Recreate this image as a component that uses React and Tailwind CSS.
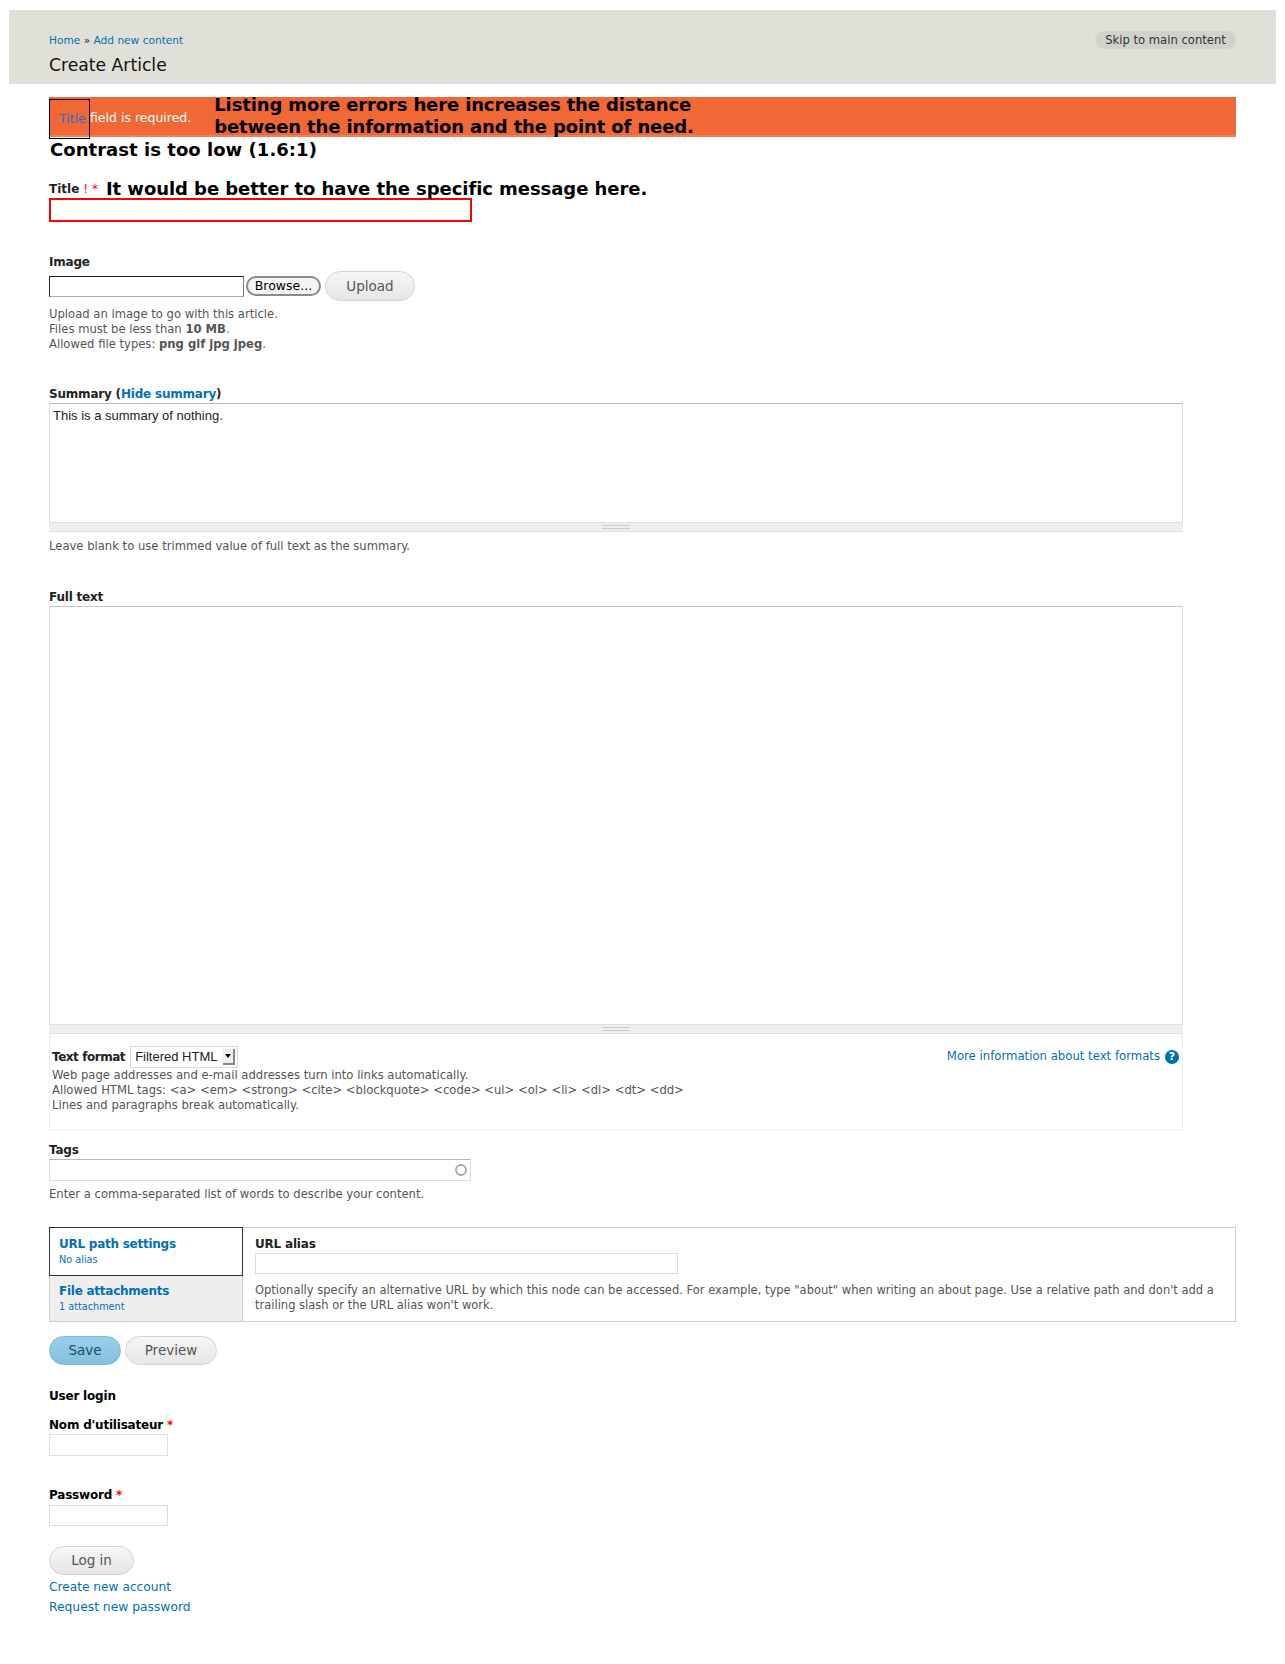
const linkCls = "text-[#0071b3]";
const labelCls = "block text-[12px] leading-[16px] font-bold tracking-[-0.2px] text-[#222]";
const helpCls = "text-[11.6px] leading-[15px] text-[#555]";
const btnCls = "rounded-[15px] border border-[#d4d4d4] bg-gradient-to-b from-[#f6f6f6] to-[#e6e6e6] text-[13.5px] text-[#555] text-center";

function Grip() {
  return (
    <div className="h-[10px] bg-[#eeeeee] border-y border-[#e0e0e0] flex items-center justify-center">
      <div className="w-[28px] h-[4px] border-y border-[#cccccc]" />
    </div>
  );
}

export default function App() {
  return (
    <div className="w-[1285px] h-[1664px] bg-white font-['DejaVu_Sans',sans-serif] text-[#333] pt-[10px] pl-[9px] pr-[9px]">
      <header className="h-[74px] bg-[#e0e0d8] pl-[40px] pr-[40px] flex justify-between">
        <div className="pt-[22px]">
          <div className="text-[10.6px] leading-[16px] text-[#222]">
            <a className={linkCls}>Home</a> » <a className={linkCls}>Add new content</a>
          </div>
          <h1 className="mt-[5px] text-[17.2px] leading-[24px] text-[#111]">Create Article</h1>
        </div>
        <div className="mt-[21px] h-[18px] w-[141px] rounded-[9px] bg-[#d2d2ca] text-[11.6px] leading-[18px] text-[#333] text-center">
          Skip to main content
        </div>
      </header>

      <main className="pl-[40px] pr-[40px]">
        <div className="mt-[13px] h-[40px] bg-[#f06835] border-b-2 border-[#f0805a] flex">
          <div className="mt-[2px] h-[40px] w-[41px] shrink-0 border border-black pl-[9px] text-[12.5px] leading-[38px] text-[#2a72c8]">
            Title
          </div>
          <span className="text-[12.5px] leading-[41px] text-white">field is required.</span>
          <div className="ml-[23px] -mt-[3px] text-[18px] leading-[21.5px] tracking-[-0.13px] font-bold text-black whitespace-nowrap">
            Listing more errors here increases the distance
            <br />
            between the information and the point of need.
          </div>
        </div>
        <div className="mt-[2px] pl-[1px] text-[18px] leading-[22px] tracking-[0.04px] font-bold text-black">Contrast is too low (1.6:1)</div>

        <div className="mt-[17px] flex items-center h-[20px] font-bold">
          <span className="mt-[2px] text-[12px] text-[#222]">Title</span>
          <span className="ml-[4px] mt-[2px] text-[#ff0000] font-normal text-[12px]">! *</span>
          <span className="ml-[8px] text-[18px] tracking-[-0.06px] text-black">It would be better to have the specific message here.</span>
        </div>
        <input className="block w-[423px] h-[24px] border-2 border-[#ff0000]" />

        <label className={`${labelCls} mt-[32px]`}>Image</label>
        <div className="mt-[1px] flex items-center h-[30px]">
          <input className="w-[195px] h-[21px] border border-[#777] border-t-[#222] border-l-[#222] border-b-[#aaa]" />
          <div className="ml-[2px] w-[75px] h-[20px] rounded-[10px] border-2 border-[#8a8a8a] bg-[#f4f4f4] text-[12.5px] leading-[16px] text-black text-center">
            Browse...
          </div>
          <div className={`${btnCls} ml-[4px] w-[90px] h-[30px] leading-[28px]`}>Upload</div>
        </div>
        <div className={`${helpCls} mt-[6px]`}>
          Upload an image to go with this article.
          <br />
          Files must be less than <strong>10 MB</strong>.
          <br />
          Allowed file types: <strong>png gif jpg jpeg</strong>.
        </div>

        <label className={`${labelCls} mt-[34px]`}>
          Summary (<a className={linkCls}>Hide summary</a>)
        </label>
        <div className="w-[1134px] mt-[1px]">
          <textarea
            defaultValue="This is a summary of nothing."
            className="block w-full h-[119px] border border-[#dddddd] border-b-0 border-t-[#b8b8b8] px-[3px] py-[4px] font-['Liberation_Sans',sans-serif] text-[13px] leading-[16px] text-[#222] resize-none"
          />
          <Grip />
        </div>
        <div className={`${helpCls} mt-[7px]`}>Leave blank to use trimmed value of full text as the summary.</div>

        <label className={`${labelCls} mt-[35px]`}>Full text</label>
        <div className="w-[1134px] mt-[1px]">
          <textarea className="block w-full h-[418px] border border-[#dddddd] border-t-[#c8c8c8] border-b-0 resize-none" />
          <Grip />
          <div className="h-[96px] border border-t-0 border-[#eeeeee] pl-[2px] pr-[3px] pt-[12px]">
            <div className="flex items-center justify-between h-[22px]">
              <div className="flex items-center">
                <span className="text-[12px] font-bold tracking-[-0.45px] text-[#222]">Text format</span>
                <div className="ml-[5px] w-[108px] h-[22px] border border-[#dddddd] flex items-center justify-between pl-[4px] pr-[2px] font-['Liberation_Sans',sans-serif] text-[13px] text-[#222]">
                  Filtered HTML
                  <span className="w-[12px] h-[16px] bg-[#eeeeee] border-r-2 border-b-2 border-[#888] flex items-center justify-center">
                    <span className="border-x-[3px] border-x-transparent border-t-[4px] border-t-black" />
                  </span>
                </div>
              </div>
              <div className="flex items-center">
                <a className={`${linkCls} text-[11.7px]`}>More information about text formats</a>
                <span className="ml-[5px] w-[14px] h-[14px] rounded-full bg-[#0071b3] text-white text-[11px] leading-[14px] font-bold text-center">?</span>
              </div>
            </div>
            <div className={helpCls}>
              Web page addresses and e-mail addresses turn into links automatically.
              <br />
              Allowed HTML tags: &lt;a&gt; &lt;em&gt; &lt;strong&gt; &lt;cite&gt; &lt;blockquote&gt; &lt;code&gt; &lt;ul&gt; &lt;ol&gt; &lt;li&gt; &lt;dl&gt; &lt;dt&gt; &lt;dd&gt;
              <br />
              Lines and paragraphs break automatically.
            </div>
          </div>
        </div>

        <label className={`${labelCls} mt-[12px]`}>Tags</label>
        <div className="mt-[1px] w-[422px] h-[22px] border border-[#dddddd] border-t-[#b8b8b8] flex items-center justify-end pr-[3px]">
          <span className="w-[12px] h-[12px] rounded-full border-2 border-[#aaa]" />
        </div>
        <div className={`${helpCls} mt-[6px]`}>Enter a comma-separated list of words to describe your content.</div>

        <div className="mt-[25px] h-[95px] border border-[#cccccc] flex">
          <div className="w-[193px] shrink-0 bg-[#eeeeee] border-r border-[#cccccc]">
            <div className="h-[49px] -ml-[1px] -mt-[1px] w-[194px] bg-white border border-[#333] pl-[9px] pt-[8px]">
              <div className={`${linkCls} text-[12px] leading-[16px] font-bold tracking-[-0.25px]`}>URL path settings</div>
              <div className={`${linkCls} text-[9.7px] leading-[16px]`}>No alias</div>
            </div>
            <div className="pl-[9px] pt-[7px]">
              <div className={`${linkCls} text-[12px] leading-[16px] font-bold tracking-[-0.25px]`}>File attachments</div>
              <div className={`${linkCls} text-[9.7px] leading-[16px]`}>1 attachment</div>
            </div>
          </div>
          <div className="pl-[12px] pr-[12px] pt-[8px] grow">
            <label className={labelCls}>URL alias</label>
            <input className="block mt-[1px] w-[423px] h-[21px] border border-[#dddddd]" />
            <div className="mt-[9px] text-[11.5px] leading-[15px] text-[#555]">
              Optionally specify an alternative URL by which this node can be accessed. For example, type "about" when writing an about page. Use a relative path and don't add a trailing slash or the URL alias won't work.
            </div>
          </div>
        </div>

        <div className="mt-[14px] flex gap-[4px]">
          <div className="w-[72px] h-[29px] rounded-[15px] border border-[#7fb8d8] bg-gradient-to-b from-[#9acfe9] to-[#82c0e0] text-[13.5px] leading-[27px] text-[#1c4a60] text-center">
            Save
          </div>
          <div className={`${btnCls} w-[92px] h-[29px] leading-[27px]`}>Preview</div>
        </div>

        <div className="mt-[23px] text-[12px] leading-[16px] font-bold tracking-[-0.2px] text-black">User login</div>
        <label className={`${labelCls} mt-[13px] !text-black`}>
          Nom d'utilisateur <span className="text-[#ff0000]">*</span>
        </label>
        <input className="block w-[119px] h-[22px] mt-[1px] border border-[#e0e0e0]" />
        <label className={`${labelCls} mt-[31px] !text-black`}>
          Password <span className="text-[#ff0000]">*</span>
        </label>
        <input className="block w-[119px] h-[21px] mt-[2px] border border-[#dddddd]" />
        <div className={`${btnCls} mt-[20px] w-[85px] h-[29px] leading-[27px]`}>Log in</div>
        <a className={`${linkCls} block mt-[2px] text-[12.2px] leading-[20px]`}>Create new account</a>
        <a className={`${linkCls} block text-[12.3px] leading-[20px]`}>Request new password</a>
      </main>
    </div>
  );
}
